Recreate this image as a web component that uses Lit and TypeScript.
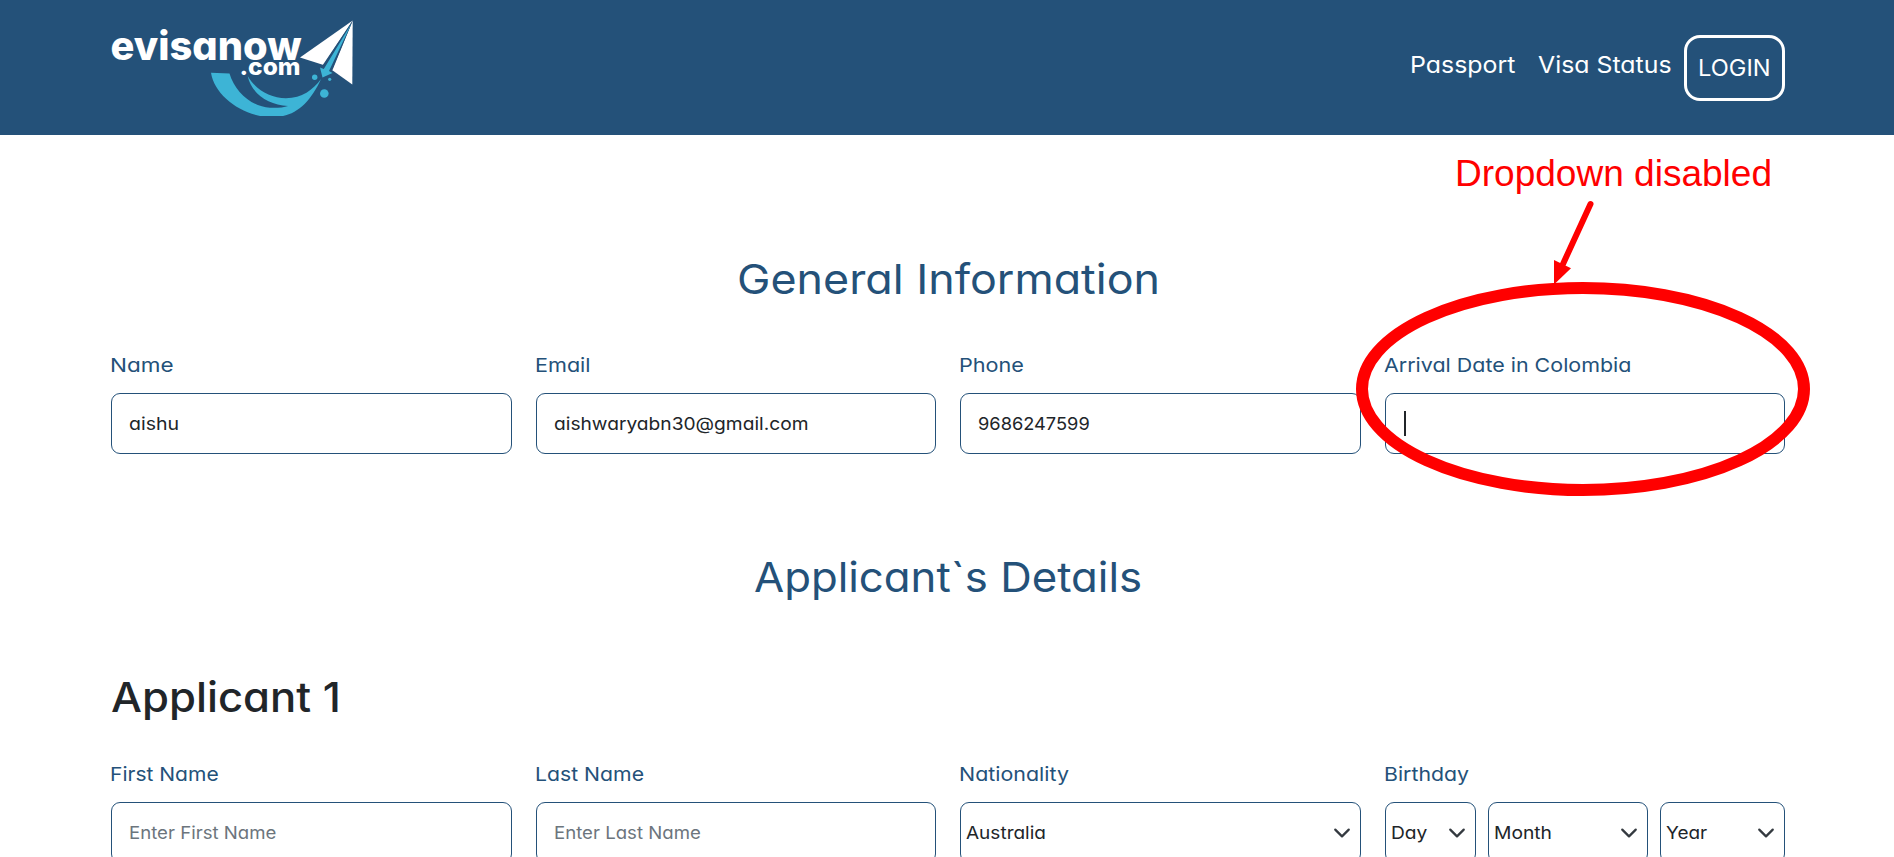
import { LitElement, html, css, svg } from "lit";
import { customElement, property } from "lit/decorators.js";

/** Inline text stretched horizontally so that it fills a given width. */
@customElement("fitted-text")
class FittedText extends LitElement {
  @property() text = "";
  @property({ type: Number }) width = 0;

  static styles = css`
    :host { display: inline-block; white-space: pre; text-align: left; vertical-align: top; }
    .run { display: inline-block; vertical-align: top; transform-origin: 0 50%; }
  `;

  updated() {
    const run = this.renderRoot.querySelector(".run") as HTMLElement;
    this.style.width = `${this.width}px`;
    run.style.transform = `scaleX(${this.width / run.offsetWidth})`;
  }

  render() {
    return html`<span class="run">${this.text}</span>`;
  }
}

const t = (text: string, width: number) =>
  html`<fitted-text .text=${text} .width=${width}></fitted-text>`;

const chevron = html`<svg class="chevron" viewBox="0 0 16 16" width="18" height="18">
  <path d="m2 5 6 6 6-6" fill="none" stroke="#343a40" stroke-width="2" stroke-linecap="round" stroke-linejoin="round"/>
</svg>`;

@customElement("app-root")
class AppRoot extends LitElement {
  static styles = css`
    :host {
      display: block;
      position: relative;
      height: 857px;
      overflow: hidden;
      background: #fff;
      color: #212529;
      font-family: Inter, "Open Sans", sans-serif;
      font-feature-settings: "cv11" 1;
    }
    * { box-sizing: border-box; }
    .header {
      display: flex;
      justify-content: space-between;
      align-items: flex-start;
      height: 135px;
      padding: 0 109px 0 111px;
      background: #245179;
      color: #fff;
      font-size: 23px;
      line-height: 36px;
    }
    .logo { display: block; margin-top: 19px; }
    .logo-text { font-family: Inter, sans-serif; font-weight: 800; fill: #fff; }
    .nav { display: flex; align-items: flex-start; padding-top: 35px; }
    .link { margin-top: 12px; margin-right: 23px; }
    .link.last { margin-right: 12px; }
    .login {
      width: 101px;
      height: 66px;
      padding: 12px 0 0 11px;
      border: 3px solid #fff;
      border-radius: 16px;
    }
    .main { padding: 119px 109px 0 111px; }
    .title {
      height: 50px;
      margin: 0;
      text-align: center;
      font-size: 41px;
      font-weight: 370;
      line-height: 50px;
      color: #245179;
    }
    .title.second { margin-top: 98px; }
    .applicant { height: 50px; margin: 70px 0 0; font-size: 41px; font-weight: 500; line-height: 50px; }
    .row { display: grid; grid-template-columns: repeat(4, 1fr); column-gap: 24px; margin-top: 46px; }
    .row.details { margin-top: 37px; }
    .label {
      height: 30px;
      margin: 0 0 13px -1px;
      font-size: 19.3px;
      font-weight: 370;
      line-height: 30px;
      color: #245179;
    }
    .box {
      display: flex;
      align-items: center;
      height: 61px;
      padding: 0 17px;
      border: 1px solid #245179;
      border-radius: 9px;
      font-size: 17.6px;
      font-weight: 370;
      line-height: 28px;
    }
    .box.empty { color: #6c757d; }
    .box.select { justify-content: space-between; padding: 0 9px 0 5px; }
    .caret { width: 2px; height: 25px; margin-left: 1px; background: #212529; }
    .birthday { display: grid; grid-template-columns: 91px 160px 125px; column-gap: 12px; }
    .chevron { display: block; }
    .marks { position: absolute; left: 0; top: 0; pointer-events: none; }
    .note { font-family: "Liberation Sans", Arial, sans-serif; font-size: 36.5px; fill: #f00; }
  `;

  private field(label: string, lw: number, value: string, vw: number, empty = false) {
    return html`<div>
      <div class="label">${t(label, lw)}</div>
      <div class="box ${empty ? "empty" : ""}">${t(value, vw)}</div>
    </div>`;
  }

  private select(value: string, width: number) {
    return html`<div class="box select">${t(value, width)}${chevron}</div>`;
  }

  private logo() {
    return html`<svg class="logo" width="246" height="99" viewBox="111 19 246 99">
      ${svg`
      <text class="logo-text" x="110.5" y="59.5" font-size="39.5" textLength="191" lengthAdjust="spacingAndGlyphs">evisanow</text>
      <text class="logo-text" x="239.5" y="75" font-size="24" textLength="61" lengthAdjust="spacingAndGlyphs">.com</text>
      <path fill="#fff" d="M352.7 20.5 300 57.5 323.5 65Z"/>
      <path fill="#fff" d="M352.7 20.5 332 70 352.3 84.5Z"/>
      <path fill="#245179" d="M352.7 20.5 322.8 65 332.5 70Z"/>
      <path fill="#3db4d6" d="M351.5 23.5 323.8 69 320 67.5 322.5 77.5 332.5 73 329 71Z"/>
      <path fill="#3db4d6" d="M211 72.7 229.5 73.5C235 92 252 107 270 107.8 278 108 284 107.5 288 106 268 105 251 93 247.7 76 255 89 270 98 286 98.3 302 98 313 90 321 79 312 99 299 113 283 116H260C236 111 214 93 211 72.7Z"/>
      <circle cx="314.7" cy="77.3" r="2.7" fill="#3db4d6"/>
      <circle cx="329.7" cy="79.3" r="1.6" fill="#3db4d6"/>
      <circle cx="324.3" cy="93.5" r="4.3" fill="#3db4d6"/>`}
    </svg>`;
  }

  render() {
    return html`
      <header class="header">
        ${this.logo()}
        <nav class="nav">
          <span class="link">${t("Passport", 105)}</span>
          <span class="link last">${t("Visa Status", 134)}</span>
          <span class="login">${t("LOGIN", 73)}</span>
        </nav>
      </header>
      <main class="main">
        <h2 class="title">${t("General Information", 423)}</h2>
        <section class="row">
          ${this.field("Name", 63, "aishu", 50)}
          ${this.field("Email", 56, "aishwaryabn30@gmail.com", 255)}
          ${this.field("Phone", 65, "9686247599", 112)}
          <div>
            <div class="label">${t("Arrival Date in Colombia", 248)}</div>
            <div class="box"><span class="caret"></span></div>
          </div>
        </section>
        <h2 class="title second">${t("Applicant`s Details", 388)}</h2>
        <h2 class="applicant">${t("Applicant 1", 230)}</h2>
        <section class="row details">
          ${this.field("First Name", 109, "Enter First Name", 147, true)}
          ${this.field("Last Name", 109, "Enter Last Name", 147, true)}
          <div>
            <div class="label">${t("Nationality", 110)}</div>
            ${this.select("Australia", 80)}
          </div>
          <div>
            <div class="label">${t("Birthday", 85)}</div>
            <div class="birthday">
              ${this.select("Day", 36)}${this.select("Month", 58)}${this.select("Year", 41)}
            </div>
          </div>
        </section>
      </main>
      <svg class="marks" width="1894" height="857" viewBox="0 0 1894 857">
        <text class="note" x="1455" y="185.6" textLength="317" lengthAdjust="spacingAndGlyphs">Dropdown disabled</text>
        <path d="M1590.5 204 1563 264" stroke="#f00" stroke-width="6" stroke-linecap="round"/>
        <path d="M1554 260 1571 268.3 1554 284.5Z" fill="#f00"/>
        <ellipse cx="1583" cy="389" rx="221" ry="101" fill="none" stroke="#f00" stroke-width="12"/>
      </svg>
    `;
  }
}
